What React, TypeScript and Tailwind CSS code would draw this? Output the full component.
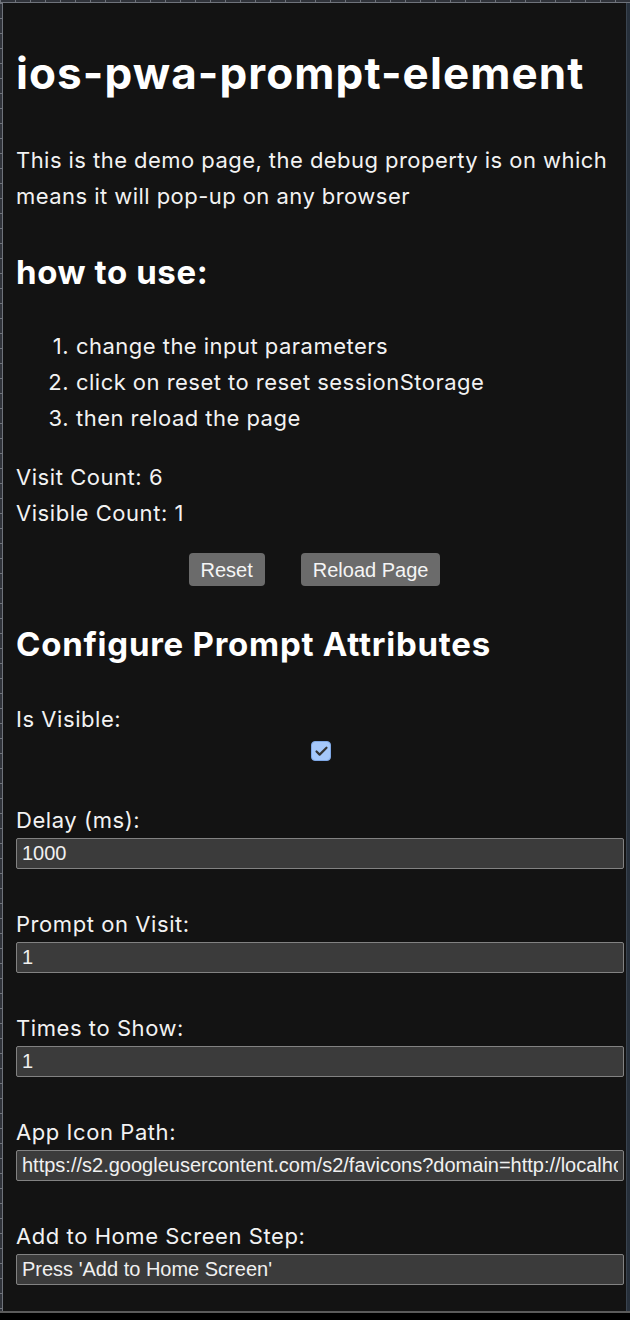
import { Check } from "lucide-react";

const fields = [
  { label: "Delay (ms):", value: "1000" },
  { label: "Prompt on Visit:", value: "1" },
  { label: "Times to Show:", value: "1" },
  {
    label: "App Icon Path:",
    value: "https://s2.googleusercontent.com/s2/favicons?domain=http://localhost:8080",
  },
  { label: "Add to Home Screen Step:", value: "Press 'Add to Home Screen'" },
];

const steps = [
  "change the input parameters",
  "click on reset to reset sessionStorage",
  "then reload the page",
];

export default function App() {
  return (
    <div className="w-[630px] h-[1320px] bg-black flex flex-col overflow-hidden font-['Inter',sans-serif] text-white">
      {/* ruler along the top edge */}
      <div className="h-[3px] shrink-0 bg-[repeating-linear-gradient(90deg,#6f737b_0px,#6f737b_1px,#30333a_1px,#30333a_15px)] border-b border-[#6f737b]" />

      <div className="flex flex-1 min-h-0">
        {/* ruler along the left edge */}
        <div className="w-[3px] shrink-0 bg-[repeating-linear-gradient(180deg,#6f737b_0px,#6f737b_1px,#30333a_1px,#30333a_15px)] border-r border-[#6f737b]" />

        <main className="flex-1 bg-[#131313] pl-[13px] pr-[2px]">
          <h1 className="mt-[44px] text-[44px] leading-[53px] font-bold tracking-[1.1px]">
            ios-pwa-prompt-element
          </h1>

          <p className="mt-[42px] text-[22px] leading-[36px] tracking-[0.45px] text-[#f2f2f2]">
            This is the demo page, the debug property is on which means it will
            pop-up on any browser
          </p>

          <h2 className="mt-[38px] text-[33px] leading-[40px] font-bold tracking-[0.6px]">
            how to use:
          </h2>

          <ol className="mt-[36px] text-[22px] leading-[36px] tracking-[0.47px] text-[#f2f2f2]">
            {steps.map((s, i) => (
              <li key={s} className="flex">
                <span className="w-[60px] text-right pr-[7px]">{i + 1}.</span>
                <span>{s}</span>
              </li>
            ))}
          </ol>

          <div className="mt-[23px] text-[22px] leading-[36px] tracking-[0.55px] text-[#f2f2f2]">
            <div>Visit Count: 6</div>
            <div>Visible Count: 1</div>
          </div>

          <div className="mt-[22px] flex justify-center gap-[36px] pr-[11px] font-['Liberation_Sans',Arial,sans-serif]">
            <button
              type="button"
              className="h-[33px] px-[12px] rounded-[4px] bg-[#6b6b6b] text-[20px] text-[#f5f5f5]"
            >
              Reset
            </button>
            <button
              type="button"
              className="h-[33px] px-[12px] rounded-[4px] bg-[#6b6b6b] text-[20px] text-[#f5f5f5]"
            >
              Reload Page
            </button>
          </div>

          <h2 className="mt-[38px] text-[33px] leading-[40px] font-bold tracking-[0.75px]">
            Configure Prompt Attributes
          </h2>

          <div className="mt-[37px] text-[22px] leading-[36px] tracking-[0.55px] text-[#f2f2f2]">
            Is Visible:
          </div>
          <div className="mt-[4px] flex justify-center pl-[2px]">
            <label className="w-[20px] h-[20px] rounded-[4px] bg-[#a5c8fb] border border-[#7fa8e6] flex items-center justify-center">
              <input type="checkbox" defaultChecked className="sr-only" />
              <Check size={15} strokeWidth={3.5} className="text-[#333]" />
            </label>
          </div>

          <div className="mt-[41px] flex flex-col gap-[37px]">
            {fields.map((f) => (
              <label key={f.label} className="flex flex-col">
                <span className="text-[22px] leading-[36px] tracking-[0.57px] text-[#f2f2f2]">
                  {f.label}
                </span>
                <input
                  type="text"
                  defaultValue={f.value}
                  className="h-[31px] w-full px-[5px] rounded-[2px] bg-[#3b3b3b] border border-[#828282] text-[20px] text-[#f0f0f0] font-['Liberation_Sans',Arial,sans-serif] outline-none"
                />
              </label>
            ))}
          </div>
        </main>

        {/* window edge on the right */}
        <div className="w-[4px] shrink-0 bg-[#27303b] border-l border-[#3a4450]" />
      </div>

      <div className="h-[2px] shrink-0 bg-[#5a5a5a]" />
      <div className="h-[7px] shrink-0 bg-black" />
    </div>
  );
}
